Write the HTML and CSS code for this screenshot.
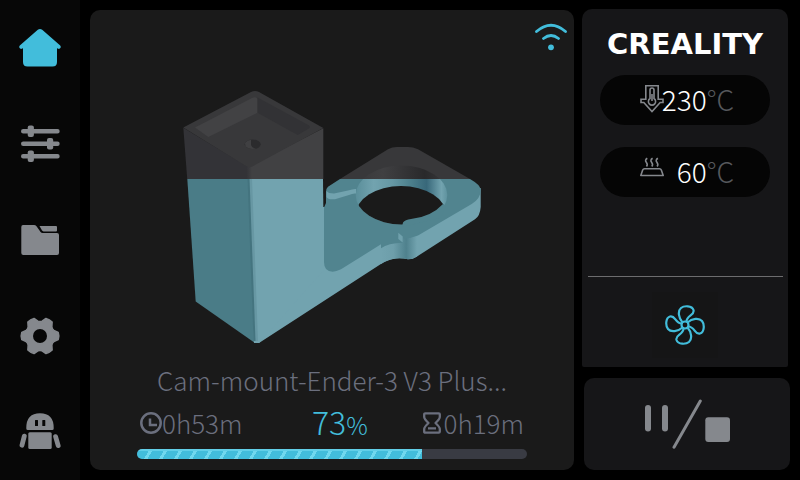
FILE: index.html
```
<!DOCTYPE html>
<html lang="en">
<head>
    <meta charset="utf-8">
    <title>Printing</title>
    <link rel="stylesheet" href="styles.css">
</head>
<body>
    <nav class="sidebar">
        <a href="#home" class="nav-link active" aria-label="Home">
            <svg width="44" height="44" viewBox="0 0 44 44"><path d="M19.8 3.8Q22 2 24.2 3.8L42.2 19.6Q43.8 22 41 23L39 22.2V36Q39 40.5 34.5 40.5H9.5Q5 40.5 5 36V22.2L3 23Q.2 22 1.8 19.6Z"/></svg>
        </a>
        <a href="#tune" class="nav-link" aria-label="Tune">
            <svg width="44" height="44" viewBox="0 0 44 44">
                <path d="M5.2 9.2H39.5M5.2 21.8H39.5M5.2 34.2H39.5" stroke="currentColor" stroke-width="4.4" stroke-linecap="round"/>
                <rect x="9.7" y="3.4" width="6.2" height="11.6" rx="2"/>
                <rect x="29" y="16" width="6.2" height="11.6" rx="2"/>
                <rect x="9.7" y="28.4" width="6.2" height="11.6" rx="2"/>
            </svg>
        </a>
        <a href="#files" class="nav-link" aria-label="Files">
            <svg width="44" height="44" viewBox="0 0 44 44">
                <path d="M5 7H16Q17.5 7 18.5 8.2L22.6 14Q23.4 15 24.6 15H39Q41 15 41 17V35Q41 37 39 37H5.3Q3.3 37 3.3 35V9Q3.3 7 5 7Z"/>
                <path d="M21.5 8H38Q39 8 39 9V12.4Q39 13.4 38 13.4H25.5Q24.6 13.4 24 12.6Z"/>
            </svg>
        </a>
        <a href="#settings" class="nav-link" aria-label="Settings">
            <svg width="44" height="44" viewBox="-22 -22 44 44">
                <path d="M18.2-3.5Q19.4 0 18.2 3.5L13.9 5.6Q12 6.8 11.8 9.2L12.1 14Q9.5 16.6 6 17.5L2.1 14.9Q0 13.8-2.1 14.9L-6 17.5Q-9.5 16.6-12.1 14L-11.8 9.2Q-12 6.8-13.9 5.6L-18.2 3.5Q-19.4 0-18.2-3.5L-13.9-5.6Q-12-6.8-11.8-9.2L-12.1-14Q-9.5-16.6-6-17.5L-2.1-14.9Q0-13.8 2.1-14.9L6-17.5Q9.5-16.6 12.1-14L11.8-9.2Q12-6.8 13.9-5.6Z" stroke="currentColor" stroke-width="1.6" stroke-linejoin="round"/>
                <circle r="7" fill="#070707"/>
            </svg>
        </a>
        <a href="#support" class="nav-link" aria-label="Support">
            <svg width="44" height="44" viewBox="0 0 44 44">
                <path fill-rule="evenodd" d="M8.3 18Q8.3 3.3 22 3.3T35.7 18V18.5Q35.7 20 34.2 20H9.8Q8.3 20 8.3 18.5ZM17 10.5V15.5Q17 16 17.5 16H19.5Q20 16 20 15.5V10.5Q20 10 19.5 10H17.5Q17 10 17 10.5ZM24.3 10.5V15.5Q24.3 16 24.8 16H26.8Q27.3 16 27.3 15.5V10.5Q27.3 10 26.8 10H24.8Q24.3 10 24.3 10.5Z"/>
                <rect x="10.3" y="22.3" width="23.4" height="16.7" rx="1.5"/>
                <path d="M6.3 26.2L4 35.2M37.6 26.6L40.2 35.6" stroke="currentColor" stroke-width="4.8" stroke-linecap="round"/>
            </svg>
        </a>
    </nav>

    <main class="job">
        <div class="job-header">
            <svg width="32" height="28" viewBox="0 0 32 28" fill="none" stroke="currentColor" stroke-width="2.8" stroke-linecap="round" role="img" aria-label="Wi-Fi connected">
                <path d="M1.5 8.5Q16-4 30.5 8.5M8.5 15.5Q16 9.5 23.5 15.5"/>
                <circle cx="16" cy="24.3" r="2.9" fill="currentColor" stroke="none"/>
            </svg>
        </div>

        <svg class="model" width="304" height="258" viewBox="180 88 304 258" role="img" aria-label="Model preview">
            <defs>
                <linearGradient id="wall">
                    <stop offset="0" stop-color="#598d99"/>
                    <stop offset=".2" stop-color="#72a3af"/>
                    <stop offset=".4" stop-color="#6698a4"/>
                    <stop offset=".6" stop-color="#4c7f8c"/>
                    <stop offset=".77" stop-color="#38687a"/>
                    <stop offset=".93" stop-color="#72a3af"/>
                    <stop offset="1" stop-color="#5c909c"/>
                </linearGradient>
                <linearGradient id="wallTodo">
                    <stop offset="0" stop-color="#38383a"/>
                    <stop offset=".3" stop-color="#404042"/>
                    <stop offset=".75" stop-color="#29292b"/>
                    <stop offset="1" stop-color="#3a3a3c"/>
                </linearGradient>
                <linearGradient id="lip">
                    <stop offset="0" stop-color="#72a3af"/>
                    <stop offset=".35" stop-color="#6d9eaa"/>
                    <stop offset=".7" stop-color="#4f818d"/>
                    <stop offset="1" stop-color="#72a3af"/>
                </linearGradient>
                <linearGradient id="edgeTodo">
                    <stop offset="0" stop-color="#343438"/>
                    <stop offset="1" stop-color="#414143"/>
                </linearGradient>
                <clipPath id="printed"><rect x="180" y="179" width="304" height="170"/></clipPath>
                <clipPath id="todo"><rect x="180" y="88" width="304" height="91"/></clipPath>
                <clipPath id="bore"><ellipse cx="401.5" cy="195" rx="45.8" ry="29.5"/></clipPath>
            </defs>

            <!-- bracket -->
            <path fill="#72a3af" d="M322 207H340L400 196L480.7 188V207Q480 216 475 219.3L416.7 256.7Q413 259.3 408 259.3Q402 258 396 258.5Q389 259 384 262L259 343H254L250 207Z"/>
            <path fill="url(#lip)" d="M381 244Q392 236 417 236V256.5Q413 259.3 408 259.3Q402 258 396 258.5Q389 259 381 264Z"/>
            <path fill="#51848f" d="M340 179L328 186.8Q326 188.5 326 192V203L324 207.5V262Q324 271.7 332.7 271.7Q336 271.7 341 269.3L381 244.3V248.3Q388 242.8 403 242.7V238.5Q411 238.5 418 235.5L471.7 204Q480.7 198.5 480.7 190Q480.7 185 470 179Z"/>
            <path fill="#38383a" d="M340 179L388 149.3Q392 147 397 147H408Q413 147 418 149.3L470 179Z"/>
            <path fill="#72a3af" d="M326.5 191Q328 193.5 334 193.5L348 190.5Q354 188.5 356 189V193.5Q353 193 349 195L335 199.2Q328 200 326.5 197Z"/>
            <g clip-path="url(#bore)">
                <rect x="355" y="179" width="93" height="48" fill="url(#wall)"/>
                <rect x="355" y="164" width="93" height="15" fill="url(#wallTodo)"/>
                <ellipse cx="401" cy="215" rx="45.5" ry="29" fill="#1a1a1a"/>
            </g>
            <path fill="#51848f" d="M402 227L403 222.5Q405 219.5 411 219Q431 217 443 204L446 206L440 218Z"/>
            <path fill="#6fa0ac" d="M398.3 232.8L402.7 236.5V242.5L398.3 239Z"/>

            <!-- tower, printed part -->
            <g clip-path="url(#printed)">
                <path fill="#4a7c87" d="M187.3 179H250L255 343L195.7 301.5Z"/>
                <path fill="#72a3af" d="M249 179H323L324 270L259 343H254Z"/>
                <path stroke="#6797a3" stroke-width="3" d="M250.5 178L256.5 341"/>
                <path stroke="#44747f" stroke-width="2" d="M248.5 178L254.5 341"/>
            </g>

            <!-- tower, layers still to print -->
            <g clip-path="url(#todo)">
                <path fill="#333337" d="M183.3 127.7L248.5 167V180H187.3Z"/>
                <path fill="#414143" d="M248 167L323.3 128.3V180H248Z"/>
                <path fill="url(#edgeTodo)" d="M247 166H252V180H247Z"/>
                <path fill="#38383a" d="M183.3 127.5L251 92Q255 90 259 92L323.3 128L252 166.7Q249 168 245 165.5Z"/>
                <path fill="#424244" d="M195 127.5L252 98Q256 96 257.5 99V112.7L208.3 137Z"/>
                <path fill="#323235" d="M257.5 97.5L309 125.5Q311 127.5 308 129L297.7 135L257.5 112.7Z"/>
                <ellipse cx="252.7" cy="144.3" rx="8" ry="4.8" fill="#2b2b2d"/>
                <path fill="#404042" d="M245 143Q247 140 251 139.7V145Q252 148 256 148.5Q249 150 245.5 146.5Z"/>
            </g>
        </svg>

        <div class="job-info">
            <h1 class="file-name">Cam-mount-Ender-3 V3 Plus...</h1>
            <div class="stats">
                <span class="time">
                    <svg width="22" height="22" viewBox="0 0 22 22" fill="none" stroke="currentColor" stroke-width="2.5" role="img" aria-label="Elapsed"><circle cx="11" cy="11" r="9.7"/><path d="M10 6.5V13H17"/></svg>0h53m
                </span>
                <span class="percent">73<small>%</small></span>
                <span class="time">
                    <svg width="20" height="22" viewBox="0 0 20 22" fill="none" stroke="currentColor" stroke-width="2.3" stroke-linejoin="round" role="img" aria-label="Remaining"><path d="M2.2 1.3H15.8Q16.8 1.3 16.8 2.3V5Q16.8 7 12.5 11Q16.8 15 16.8 17V19.7Q16.8 20.7 15.8 20.7H2.2Q1.2 20.7 1.2 19.7V17Q1.2 15 5.5 11Q1.2 7 1.2 5V2.3Q1.2 1.3 2.2 1.3ZM5 16.3H13"/></svg>0h19m
                </span>
            </div>
            <div class="progress" role="progressbar" aria-label="Print progress" aria-valuenow="73" aria-valuemin="0" aria-valuemax="100">
                <div class="progress-fill" style="width: 73%"></div>
            </div>
        </div>
    </main>

    <aside class="side">
        <section class="status">
            <div class="brand">CREALITY</div>
            <button class="temp" aria-label="Nozzle temperature">
                <svg width="24" height="28" viewBox="0 0 24 28" fill="none" stroke="currentColor" stroke-width="1.6">
                    <path d="M5.8.8H18.2V14.3H23V17.5H20.2L12 26.5L3.8 17.5H1V14.3H5.8Z"/>
                    <path d="M10 13.5V5Q10 3 12 3T14 5V13.5A3.6 3.6 0 1 1 10 13.5ZM12 9V16"/>
                </svg>
                <span class="value">230</span><span class="unit">°C</span>
            </button>
            <button class="temp" aria-label="Bed temperature">
                <svg width="24" height="28" viewBox="0 0 24 28" fill="none" stroke="currentColor" stroke-width="1.6" stroke-linejoin="round">
                    <path d="M4.5 11.8H19.5Q20.8 11.8 21.3 13L23.2 18.5H.8L2.7 13Q3.2 11.8 4.5 11.8Z"/>
                    <path d="M7.3 1.3Q4.5 3 6.3 5.3T6.5 9.5M12.6 1.3Q9.8 3 11.6 5.3T11.8 9.5M17.9 1.3Q15.1 3 16.9 5.3T17.1 9.5"/>
                </svg>
                <span class="value">60</span><span class="unit">°C</span>
            </button>
            <div class="fan-row">
                <button class="fan" aria-label="Fan">
                    <svg width="40" height="40" viewBox="0 0 40 40" fill="none" stroke="currentColor" stroke-width="2.2">
                        <circle cx="20" cy="20" r="3.5"/>
                        <path id="blade" d="M17.5 17.5C13.5 13 12.5 6 16 3C19 .5 27 .3 28.5 5C30 10.5 21.5 10 21.5 16.8"/>
                        <use href="#blade" transform="rotate(90 20 20)"/>
                        <use href="#blade" transform="rotate(180 20 20)"/>
                        <use href="#blade" transform="rotate(270 20 20)"/>
                    </svg>
                </button>
            </div>
        </section>
        <button class="controls" aria-label="Pause or stop">
            <svg width="86" height="50" viewBox="0 0 86 50">
                <rect x="1" y="6" width="6" height="26.5" rx="3"/>
                <rect x="18" y="6" width="6" height="26.5" rx="3"/>
                <path d="M30 48.2L56.3 2" stroke="currentColor" stroke-width="3" stroke-linecap="round"/>
                <rect x="61.3" y="18.3" width="24.7" height="24.7" rx="3"/>
            </svg>
        </button>
    </aside>
</body>
</html>
```

FILE: styles.css
```
* {
    box-sizing: border-box;
}
body {
    margin: 0;
    min-height: 100vh;
    display: grid;
    grid-template-columns: 80px 1fr 218px;
    background: #000;
    color: #6b6f7e;
    font-family: "Noto Sans CJK SC", "Noto Sans", sans-serif;
    font-weight: 300;
}
svg {
    display: block;
    flex: none;
}
button {
    border: 0;
    padding: 0;
    color: inherit;
    font: inherit;
    cursor: pointer;
}

/* left menu */
.sidebar {
    display: grid;
    grid-template-rows: repeat(5, 1fr);
    background: #070707;
}
.nav-link {
    display: flex;
    align-items: center;
    justify-content: center;
    color: #85888d;
}
.nav-link svg, .controls svg {
    fill: currentColor;
}
.nav-link.active {
    color: #42bddb;
}

/* current print */
.job {
    margin: 10px 8px 10px 10px;
    display: flex;
    flex-direction: column;
    align-items: center;
    background: #1a1a1a;
    border-radius: 10px;
}
.job-header {
    align-self: stretch;
    display: flex;
    justify-content: flex-end;
    padding: 13px 7px 0;
    color: #42bddb;
}
.model {
    margin: auto auto 14px;
}
.job-info {
    width: 100%;
    padding: 0 47px 11px;
}
.file-name {
    margin: 0;
    font-size: 26px;
    font-weight: inherit;
    line-height: 40px;
    text-align: center;
    white-space: nowrap;
}
.stats {
    display: grid;
    grid-template-columns: 172px auto 1fr;
    align-items: center;
    padding: 0 3px;
    margin-bottom: 3px;
    font-size: 26px;
    line-height: 42px;
}
.time {
    display: flex;
    align-items: center;
}
.time:last-child {
    justify-self: end;
}
.percent {
    color: #42bddb;
    font-size: 32px;
}
.percent small {
    font-size: 24px;
}
.progress {
    height: 10px;
    border-radius: 5px;
    background: #393b43;
    overflow: hidden;
}
.progress-fill {
    height: 100%;
    border-top: 2px solid #62cfe8;
    background: repeating-linear-gradient(120deg, #42bddb 0 10px, #70d8ee 10px 13px);
}

/* right column */
.side {
    display: flex;
    flex-direction: column;
    gap: 11px;
    padding: 9px 10px 10px 0;
}
.status {
    flex: 1;
    display: flex;
    flex-direction: column;
    align-items: center;
    gap: 22px;
    margin-right: 2px;
    padding-top: 20px;
    background: #161618;
    border-radius: 10px 10px 2px 2px;
}
.brand {
    margin-bottom: -6px;
    color: #fff;
    font: bold 29px/30px "DejaVu Sans", sans-serif;
}
.temp {
    width: 170px;
    height: 50px;
    display: flex;
    align-items: center;
    padding: 0 36px 3px 40px;
    border-radius: 25px;
    background: #050505;
    color: #85888d;
    font-size: 28px;
}
.temp svg {
    margin-right: -8px;
}
.value {
    flex: 1;
    color: #fff;
    text-align: right;
}
.unit {
    color: #56585c;
}
.fan-row {
    margin-top: auto;
    width: 195px;
    display: flex;
    justify-content: center;
    padding: 15px 0 9px;
    border-top: 1px solid #6c6c6e;
}
.fan {
    padding: 13px;
    background: #151516;
    color: #42bddb;
}
.controls {
    height: 92px;
    margin-left: 2px;
    display: flex;
    align-items: center;
    justify-content: center;
    border-radius: 10px;
    background: #161618;
    color: #85888d;
}
```
